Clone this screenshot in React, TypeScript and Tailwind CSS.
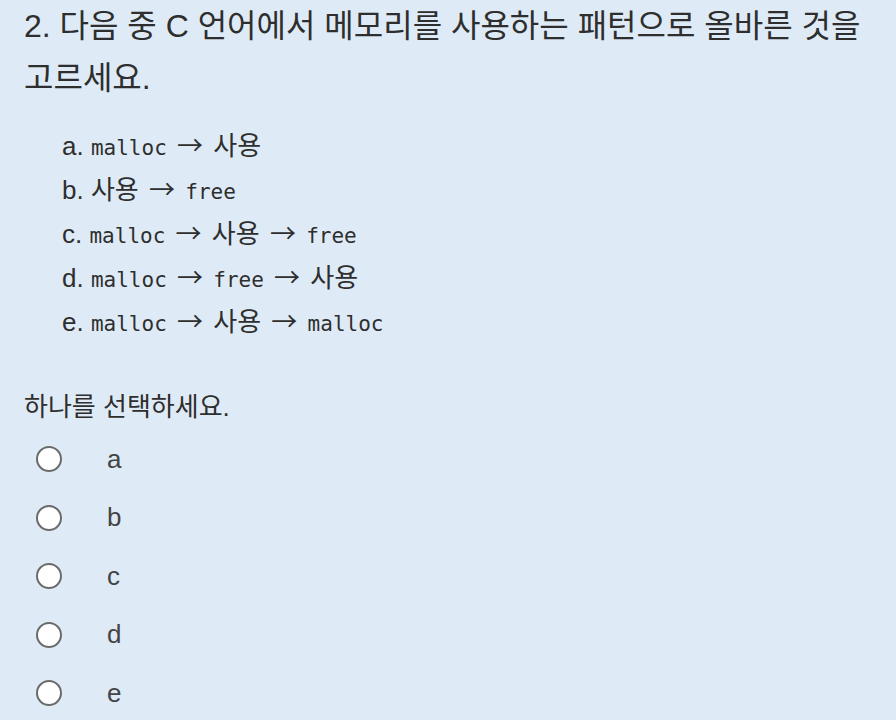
const SANS = "font-['Liberation_Sans','Noto_Sans_CJK_KR',sans-serif]";
const MONO = "font-['DejaVu_Sans_Mono','Liberation_Mono',monospace] text-[21px] leading-none";

const Code = ({ children }: { children: string }) => <span className={MONO}>{children}</span>;
const Arrow = () => <span className="mx-[3px] font-['Noto_Sans_CJK_KR',sans-serif] leading-none">→</span>;

type Part = string | { code: string } | "->";
const OPTIONS: { key: string; parts: Part[] }[] = [
  { key: "a", parts: [{ code: "malloc" }, " ", "->", " 사용"] },
  { key: "b", parts: ["사용 ", "->", " ", { code: "free" }] },
  { key: "c", parts: [{ code: "malloc" }, " ", "->", " 사용 ", "->", " ", { code: "free" }] },
  { key: "d", parts: [{ code: "malloc" }, " ", "->", " ", { code: "free" }, " ", "->", " 사용"] },
  { key: "e", parts: [{ code: "malloc" }, " ", "->", " 사용 ", "->", " ", { code: "malloc" }] },
];

export default function App() {
  return (
    <div className={`${SANS} min-h-[720px] w-[896px] bg-[#deebf6] pl-6 pr-4 text-[#2e2e2e]`}>
      <h2 className="break-keep text-[32px] font-normal leading-[52px]">
        2. 다음 중 C 언어에서 메모리를 사용하는 패턴으로 올바른 것을 고르세요.
      </h2>
      <div className="ml-[38px] mt-5 flex flex-col">
        {OPTIONS.map((o) => (
          <div key={o.key} className="h-[44px] text-[26px] leading-[44px]">
            {o.key}.{" "}
            {o.parts.map((p, i) =>
              p === "->" ? <Arrow key={i} /> : typeof p === "string" ? <span key={i}>{p}</span> : <Code key={i}>{p.code}</Code>
            )}
          </div>
        ))}
      </div>
      <p className="mt-[45px] text-[26px] leading-[36px]">하나를 선택하세요.</p>
      <div className="mt-[5px] flex flex-col">
        {OPTIONS.map((o) => (
          <label key={o.key} className="flex h-[58.5px] items-center">
            <span className="ml-3 h-[26px] w-[26px] rounded-full border-2 border-[#6b6b6b] bg-white" />
            <span className="ml-[45px] text-[26px] text-[#444]">{o.key}</span>
          </label>
        ))}
      </div>
    </div>
  );
}
